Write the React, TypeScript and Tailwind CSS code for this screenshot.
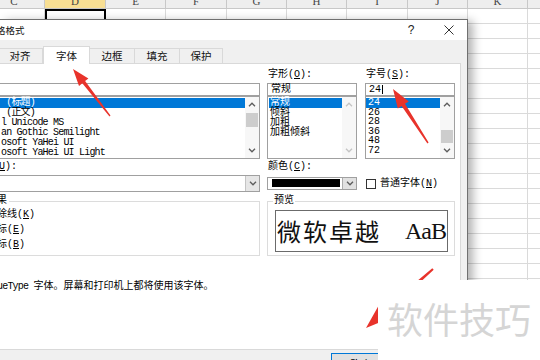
import React from "react";

const cols = ["C", "D", "E", "F", "G", "H", "I", "J", "K", "L"];
const rows = Array.from({ length: 24 }, (_, i) => i);

const ui = "font-['Liberation_Mono','Noto_Sans_CJK_SC',monospace]";
const cjk = "font-['Noto_Sans_CJK_SC',sans-serif]";

function Chevron({ up, light }: { up?: boolean; light?: boolean }) {
	return (
		<svg width="8" height="5" viewBox="0 0 8 5" className={up ? "" : "rotate-180"}>
			<polyline
				points="1,4.2 4,1.2 7,4.2"
				fill="none"
				stroke={light ? "#c4c4c4" : "#5c5c5c"}
				strokeWidth="1.3"
			/>
		</svg>
	);
}

function ScrollBar({ thumb, light }: { thumb?: "top" | "low"; light?: boolean }) {
	return (
		<div className="flex h-full w-[14px] flex-col bg-[#f7f7f7]">
			<div className="flex h-[15px] items-center justify-center">
				<Chevron up light={light} />
			</div>
			<div className="flex-1">
				{thumb === "top" && <div className="mx-px mt-px h-[14px] bg-[#cdcdcd]" />}
				{thumb === "low" && <div className="mx-px mt-[18px] h-[13px] bg-[#cdcdcd]" />}
			</div>
			<div className="flex h-[15px] items-center justify-center">
				<Chevron light={light} />
			</div>
		</div>
	);
}

const fontItems = [" (标题)", " (正文)", "l Unicode MS", "an Gothic Semilight", "osoft YaHei UI", "osoft YaHei UI Light"];
const styleItems = ["常规", "倾斜", "加粗", "加粗倾斜"];
const sizeItems = ["24", "26", "28", "36", "48", "72"];

export default function App() {
	return (
		<div className="relative h-[360px] w-[540px] overflow-hidden bg-white">
			{/* spreadsheet behind the dialog */}
			<div className="-ml-[16px] grid grid-cols-[61px_61px_60px_61px_60px_60px_61px_60px_60px_60px]">
				{cols.map((c) => (
					<div
						key={c}
						className={
							c === "D"
								? "flex h-[9px] items-end justify-center overflow-hidden border-r border-b border-[#c8c8c8] bg-[#f8df93]"
								: "flex h-[9px] items-end justify-center overflow-hidden border-r border-b border-[#c8c8c8] bg-[#eeeeee]"
						}
					>
						<span className="font-['Liberation_Serif',serif] text-[11px] leading-[14px] text-[#444]">{c}</span>
					</div>
				))}
				{rows.map((r) =>
					cols.map((c) =>
						r === 0 && c === "D" ? (
							<div key={c + r} className="h-[15px] border-2 border-black pl-[2px]">
								<span className={`${cjk} text-[11px] leading-[12px]`}>灯</span>
							</div>
						) : (
							<div key={c + r} className="h-[15px] border-r border-b border-[#dadada]" />
						),
					),
				)}
			</div>

			{/* dialog */}
			<div className="absolute left-0 top-[19px] h-[341px] w-[468px] border-t border-r border-[#707070] bg-[#f0f0f0] shadow-[5px_2px_9px_rgba(0,0,0,0.3)]">
				<div className="flex h-[20px] items-center bg-white">
					<span className={`${cjk} -ml-[4px] text-[9.5px] leading-[20px] text-[#111]`}>格格式</span>
					<div className="flex-1" />
					<div className="flex w-[38px] justify-center font-['Liberation_Sans',sans-serif] text-[12px] text-[#222]">?</div>
					<div className="flex w-[37px] justify-center">
						<svg width="10" height="10" viewBox="0 0 10 10">
							<path d="M0.5 0.5 L9.5 9.5 M9.5 0.5 L0.5 9.5" stroke="#333" strokeWidth="1" />
						</svg>
					</div>
				</div>

				{/* tabs */}
				<div className={`${cjk} flex h-[23px] items-end text-[10.5px] text-[#111]`}>
					<div className="-ml-[2px] flex h-[15px] w-[45px] items-center justify-center border-t border-r border-[#d9d9d9]">对齐</div>
					<div className="relative top-px z-10 flex h-[18px] w-[47px] items-center justify-center border-x border-t border-[#d9d9d9] bg-white">字体</div>
					<div className="flex h-[15px] w-[45px] items-center justify-center border-t border-r border-[#d9d9d9]">边框</div>
					<div className="flex h-[15px] w-[45px] items-center justify-center border-t border-r border-[#d9d9d9]">填充</div>
					<div className="flex h-[15px] w-[43px] items-center justify-center border-t border-r border-[#d9d9d9]">保护</div>
				</div>

				{/* panel */}
				<div className={`${ui} h-[287px] w-[461px] border border-l-0 border-[#d9d9d9] bg-white text-[10px] text-black`}>
					<div className="flex pt-[5px]">
						{/* font column */}
						<div className="w-[260px]">
							<div className="h-[12px]" />
							<div className="mt-[2px] h-[13px] border border-l-0 border-[#a0a0a0]" />
							<div className="flex h-[63px] border border-l-0 border-[#a0a0a0]">
								<div className="flex-1 pt-px tracking-[-0.8px]">
									{fontItems.map((f, i) => (
										<div
											key={f}
											className={
												i === 0
													? "h-[10px] bg-[#0078d7] pl-[1px] leading-[10px] whitespace-pre text-white"
													: "h-[10px] pl-[1px] leading-[10px] whitespace-pre"
											}
										>
											{f}
										</div>
									))}
								</div>
								<ScrollBar thumb="top" />
							</div>
							<div className="mt-[2px] h-[12px] leading-[12px]">
								<span className="-ml-[1px]">
									<span className="underline">U</span>):
								</span>
							</div>
							<div className="mt-[2px] flex h-[17px] justify-end border border-l-0 border-[#a0a0a0]">
								<div className="flex w-[14px] items-center justify-center border-l border-[#c4c4c4] bg-[#e6e6e6]">
									<Chevron />
								</div>
							</div>
							<div className="relative mt-[9px] h-[55px] border border-l-0 border-[#dcdcdc] pt-[5px]">
								<span className="absolute -top-[7px] -left-[3px] bg-white pr-[2px] leading-[12px]">果</span>
								<div className="-ml-[3px] h-[15px] leading-[15px]">
									除线(<span className="underline">K</span>)
								</div>
								<div className="-ml-[3px] h-[15px] leading-[15px]">
									标(<span className="underline">E</span>)
								</div>
								<div className="-ml-[3px] h-[15px] leading-[15px]">
									标(<span className="underline">B</span>)
								</div>
							</div>
						</div>

						{/* style, size, colour, preview */}
						<div className="ml-[7px] w-[188px]">
							<div className="flex">
								<div className="w-[90px]">
									<div className="h-[12px] pl-px leading-[12px]">
										字形(<span className="underline">O</span>):
									</div>
									<div className="mt-[2px] h-[13px] border border-[#a0a0a0] pl-[3px] leading-[11px]">常规</div>
									<div className="flex h-[63px] border border-[#a0a0a0]">
										<div className="flex-1 pt-px">
											{styleItems.map((s, i) => (
												<div
													key={s}
													className={
														i === 0
															? "ml-px h-[10px] bg-[#0078d7] pl-px leading-[10px] text-white"
															: "ml-px h-[10px] pl-px leading-[10px]"
													}
												>
													{s}
												</div>
											))}
										</div>
										<ScrollBar light />
									</div>
								</div>
								<div className="ml-[8px] w-[90px]">
									<div className="h-[12px] pl-px leading-[12px]">
										字号(<span className="underline">S</span>):
									</div>
									<div className="mt-[2px] flex h-[13px] items-center border border-[#a0a0a0] pl-[3px] leading-[11px]">
										24
										<span className="ml-px h-[9px] w-px bg-black" />
									</div>
									<div className="flex h-[63px] border border-[#a0a0a0]">
										<div className="flex-1 pt-px">
											{sizeItems.map((s, i) => (
												<div
													key={s}
													className={
														i === 0
															? "h-[9.5px] bg-[#0078d7] pl-[2px] leading-[9.5px] text-white"
															: "h-[9.5px] pl-[2px] leading-[9.5px]"
													}
												>
													{s}
												</div>
											))}
										</div>
										<ScrollBar thumb="low" />
									</div>
								</div>
							</div>

							<div className="mt-[2px] flex">
								<div className="w-[90px]">
									<div className="h-[12px] pl-px leading-[12px]">
										颜色(<span className="underline">C</span>):
									</div>
									<div className="mt-[4px] flex h-[13px] border border-[#a0a0a0]">
										<div className="mt-px ml-[4px] h-[8px] w-[68px] bg-black" />
										<div className="flex-1" />
										<div className="flex w-[14px] items-center justify-center border-l border-[#adadad] bg-[#e1e1e1]">
											<Chevron />
										</div>
									</div>
								</div>
								<div className="ml-[8px] flex w-[90px] items-center self-start pt-[18px]">
									<div className="ml-px h-[10px] w-[10px] border border-[#333]" />
									<span className="ml-[4px] leading-[10px]">
										普通字体(<span className="underline">N</span>)
									</span>
								</div>
							</div>

							<div className="relative mt-[11px] h-[55px] border border-[#dcdcdc]">
								<span className="absolute -top-[7px] left-[5px] bg-white px-px leading-[12px]">预览</span>
								<div className="mt-[8px] ml-[7px] flex h-[42px] w-[173px] items-center justify-between border border-[#6b6b6b] px-px">
									<span className={`${cjk} text-[24px] leading-[30px] tracking-[2px] text-[#111]`}>微软卓越</span>
									<span className="font-['Liberation_Serif',serif] text-[24px] leading-[30px] tracking-[-1px] text-[#111]">AaB</span>
								</div>
							</div>
						</div>
					</div>

					<div className="mt-[25px] h-[12px] leading-[12px] whitespace-pre">
						<span className="-ml-[3px] tracking-[-0.8px]">ueType </span>
						字体。屏幕和打印机上都将使用该字体。
					</div>
				</div>

				{/* footer */}
				<div className="flex pt-[3px] pl-[331px]">
					<div className={`${cjk} flex h-[22px] w-[60px] items-center justify-center border border-[#0078d7] bg-[#e1e1e1] text-[10.5px]`}>
						确定
					</div>
				</div>
			</div>

			{/* red annotation arrows */}
			<svg className="pointer-events-none absolute inset-0" width="540" height="360" viewBox="0 0 540 360">
				<polygon
					fill="#e8332b"
					points="73,69 88.4,78.4 85.1,81.1 110.5,115.6 109.5,116.4 82.3,83.3 79,86"
				/>
				<polygon
					fill="#e8332b"
					points="393,89 408.8,101.4 405,103.8 428.6,142.6 427.4,143.4 401.6,106 397.8,108.4"
				/>
				<polygon
					fill="#e8332b"
					points="366,328 379.5,304 383.8,308.9 432.3,268.3 433.7,269.8 387.2,312.7 391.5,317.5"
				/>
			</svg>

			{/* watermark */}
			<div className="absolute top-[280px] left-[378px] h-[80px] w-[162px] bg-white pt-[18px] pl-[9px]">
				<span className={`${cjk} text-[36px] leading-[40px] text-[#d5d5d5]`}>软件技巧</span>
			</div>
		</div>
	);
}
